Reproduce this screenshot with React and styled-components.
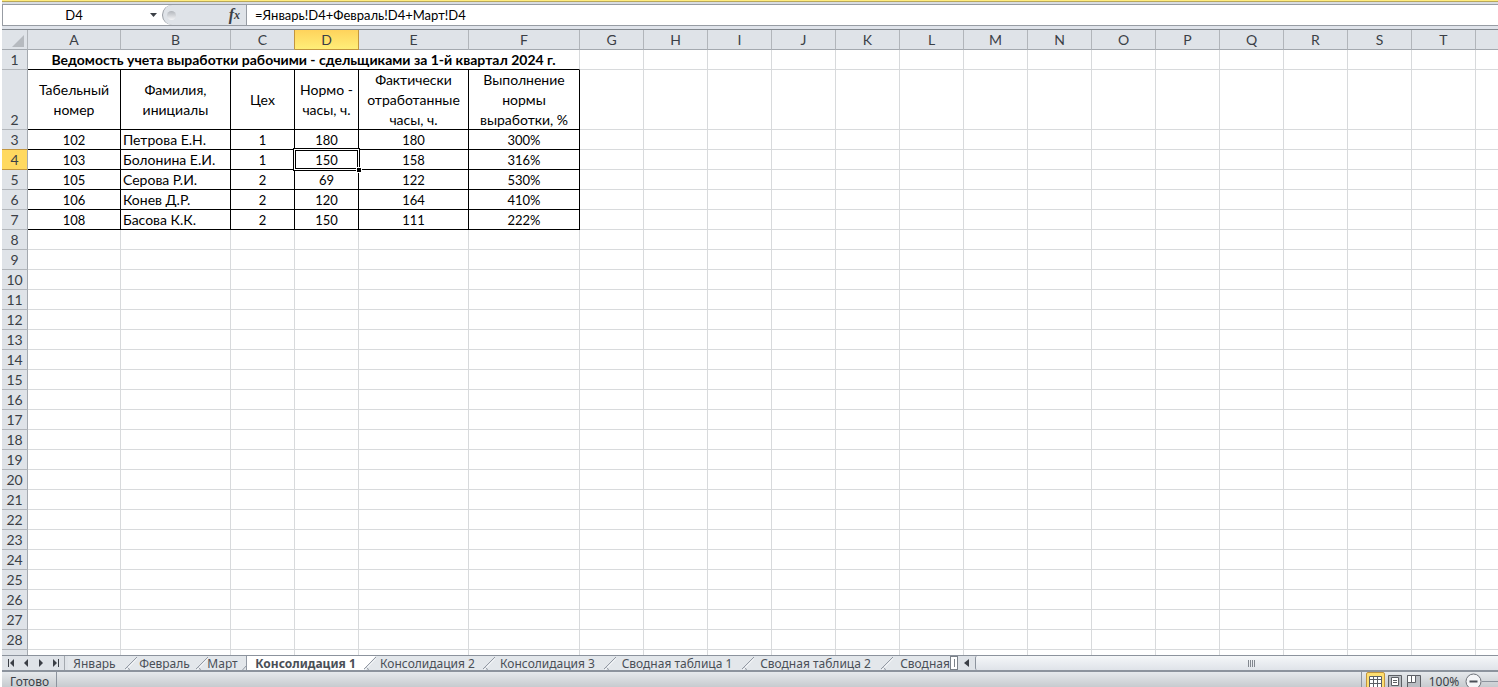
import React from 'react';
import styled, { createGlobalStyle } from 'styled-components';

const GlobalStyle = createGlobalStyle`
    * {
        box-sizing: border-box;
    }
    body {
        margin: 0;
        overflow: hidden;
    }
`

const Page = styled.div`
    display: flex;
    flex-direction: column;
    height: 100vh;
    padding-left: 2px;
    background: #ffffff;
    font-family: "Lato", "Noto Sans", sans-serif;
    font-size: 14px;
    color: #000000;
`

const TopEdge = styled.div`
    flex: none;
    height: 4px;
    background: linear-gradient(#ffec80 1px, #b9a858 1px, #b9a858 2px, #d9dde2 2px);
`

const FormulaBar = styled.div`
    flex: none;
    display: flex;
    height: 22px;
    border: 1px solid #979ca3;
    border-right: none;
`

const BareInput = styled.input`
    min-width: 0;
    padding: 0;
    border: none;
    outline: none;
    background: transparent;
    color: inherit;
    font: inherit;
    font-size: 13px;
`

const NameInput = styled(BareInput)`
    width: 142px;
    text-align: center;
`

const FormulaInput = styled(BareInput)`
    flex: 1;
    padding-left: 8px;
`

const PlainButton = styled.button`
    display: flex;
    align-items: center;
    justify-content: center;
    padding: 0;
    border: none;
    background: none;
    color: #3b3f46;
`

const NameArrow = styled(PlainButton)`
    width: 16px;
`

const FxArea = styled.div`
    flex: none;
    display: flex;
    justify-content: space-between;
    align-items: center;
    width: 85px;
    margin-left: 1px;
    padding: 0 6px 0 4px;
    border-right: 1px solid #979ca3;
    border-left: 1px solid #979ca3;
    border-radius: 11px 0 0 11px;
    background: #dfe3e8;
`

const Knob = styled.span`
    width: 9px;
    height: 9px;
    border-radius: 50%;
    background: linear-gradient(#b2b6bc, #f4f5f7);
`

const FxButton = styled(PlainButton)`
    font-family: "Liberation Serif", serif;
    font-size: 16px;
    font-style: italic;
    font-weight: bold;
    line-height: 18px;

    small {
        font-size: 12px;
    }
`

const BarGap = styled.div`
    flex: none;
    height: 4px;
    border-bottom: 1px solid #82888f;
    background: #dfe3ea;
`

const SheetArea = styled.div`
    flex: 1;
    min-height: 0;
    overflow: hidden;
`

const Sheet = styled.table`
    table-layout: fixed;
    width: 100%;
    border-collapse: separate;
    border-spacing: 0;
    line-height: 19px;
`

const Head = styled.th`
    height: 20px;
    padding: 0;
    border-right: 1px solid ${p => p.$edge ? '#c2953f' : '#b1b5ba'};
    border-bottom: 1px solid ${p => p.$active ? '#c2953f' : '#a4a9af'};
    background: ${p => p.$active ? 'linear-gradient(#ffd35c, #ffee78)' : '#dfe3e8'};
    color: #3b3f46;
    font-weight: normal;
    text-align: center;

    &:last-child {
        border-right: none;
    }
`

const RowHead = styled(Head)`
    border-right-color: #a4a9af;
    border-bottom-color: ${p => p.$edge ? '#c2953f' : '#b1b5ba'};
    background: ${p => p.$active ? '#ffd960' : '#dfe3e8'};
    vertical-align: bottom;
`

const Corner = styled(Head)`
    svg {
        display: block;
        margin: 3px 3px 0 auto;
    }
`

const Cell = styled.td`
    position: relative;
    height: 20px;
    padding: 0 2px;
    border-right: 1px solid ${p => p.$framed ? '#000000' : '#d8dadc'};
    border-bottom: 1px solid ${p => p.$framed ? '#000000' : '#d8dadc'};
    font-size: ${p => p.$numeric ? 13 : 14}px;
    line-height: ${p => p.$numeric ? 18 : 19}px;
    text-align: ${p => p.$left ? 'left' : 'center'};
    vertical-align: ${p => p.$numeric || p.$left ? 'baseline' : 'middle'};

    &:last-child {
        border-right: none;
    }
`

const TitleCell = styled(Cell)`
    border-right-color: #d8dadc;
    font-weight: bold;
    white-space: nowrap;
`

const Heading = styled.div`
    display: flex;
    align-items: center;
    justify-content: center;
    height: 59px;
    line-height: 20px;
    white-space: pre;
`

const Selection = styled.span`
    position: absolute;
    inset: -2px;
    border: 1px solid #000000;
    pointer-events: none;

    &::before {
        content: "";
        position: absolute;
        inset: 0;
        border: 1px solid #ffffff;
    }

    &::after {
        content: "";
        position: absolute;
        inset: 1px;
        border: 1px solid #000000;
    }
`

const FillHandle = styled.i`
    position: absolute;
    right: -4px;
    bottom: -4px;
    z-index: 1;
    width: 6px;
    height: 6px;
    border: 1px solid #ffffff;
    background: #000000;
`

const BottomBar = styled.div`
    flex: none;
    display: flex;
    height: 17px;
    border-top: 1px solid #8c939d;
    border-bottom: 2px solid #8c939d;
    background: #dfe3e8;
    font-family: "Noto Sans", sans-serif;
    font-size: 12px;
    color: #4a4f57;
`

const SheetNav = styled.div`
    flex: none;
    display: flex;
    width: 63px;
    padding-left: 1px;
    border-right: 1px solid #a4a9af;
`

const NavButton = styled(PlainButton)`
    width: 15px;
`

const Tabs = styled.nav`
    flex: none;
    display: flex;
    width: 885px;
    padding-left: 3px;
    overflow: hidden;
`

const Tab = styled.a`
    flex: none;
    display: flex;
    justify-content: center;
    width: ${p => p.$width}px;
    padding-right: ${p => p.$active ? 0 : 4}px;
    background: ${p => p.$active ? '#ffffff' : '#e3e7eb'};
    color: inherit;
    font-weight: ${p => p.$active ? 'bold' : 'normal'};
    line-height: 16px;
    text-decoration: none;
    white-space: nowrap;
`

const Slant = styled.svg`
    flex: none;
    display: block;
`

const Splitter = styled.div`
    flex: none;
    width: 8px;
    padding: 2px;
    border: 1px solid #7c828a;
    background: #ffffff;

    &::after {
        content: "";
        display: block;
        width: 1px;
        height: 8px;
        margin-left: 1px;
        background: #7c828a;
    }
`

const ScrollButton = styled(PlainButton)`
    width: 17px;
`

const ScrollThumb = styled.div`
    flex: 1;
    display: flex;
    align-items: center;
    justify-content: center;
    gap: 1px;
    padding-left: 28px;
    border-left: 1px solid #8c939d;
    border-radius: 2px 0 0 2px;
    background: linear-gradient(#f5f7f9, #dfe3e9);

    i {
        width: 1px;
        height: 7px;
        background: #82878f;
    }
`

const StatusBar = styled.div`
    flex: none;
    display: flex;
    height: 15px;
    overflow: hidden;
    background: linear-gradient(#e6e9ec, #c7cbcf);
    font-family: "Noto Sans", sans-serif;
    font-size: 12px;
    line-height: 20px;
    color: #3b3f46;
`

const StatusText = styled.span`
    width: 55px;
    padding-left: 8px;
    border-right: 1px solid #8c939d;
`

const ViewControls = styled.div`
    display: flex;
    align-items: flex-start;
    width: 137px;
    margin-left: auto;
    padding-left: 4px;
    border-left: 1px solid #8c939d;
`

const ViewButton = styled(PlainButton)`
    flex: none;
    width: 19px;
    height: 19px;
    border: 1px solid ${p => p.$active ? '#c2953f' : 'transparent'};
    border-radius: 2px;
    background: ${p => p.$active ? '#ffdf70' : 'none'};
`

const Zoom = styled.span`
    width: 42px;
    text-align: center;
`

const ZoomOut = styled(PlainButton)`
    flex: none;
    width: 17px;
    height: 17px;
    margin-top: 1px;
`

const ZoomTrack = styled.div`
    flex: 1;
    height: 1px;
    margin-top: 9px;
    background: #8c939d;
`

const LETTERS = 'ABCDEFGHIJKLMNOPQRST'.split('')
const WIDTHS = { A: 93, B: 110, E: 110, F: 111 }
const ROW_COUNT = 28

const HEADINGS = [
    'Табельный\nномер',
    'Фамилия,\nинициалы',
    'Цех',
    'Нормо -\nчасы, ч.',
    'Фактически\nотработанные\nчасы, ч.',
    'Выполнение\nнормы\nвыработки, %',
]

const DATA = {
    3: ['102', 'Петрова Е.Н.', '1', '180', '180', '300%'],
    4: ['103', 'Болонина Е.И.', '1', '150', '158', '316%'],
    5: ['105', 'Серова Р.И.', '2', '69', '122', '530%'],
    6: ['106', 'Конев Д.Р.', '2', '120', '164', '410%'],
    7: ['108', 'Басова К.К.', '2', '150', '111', '222%'],
}

const TABS = [
    { name: 'Январь', width: 57 },
    { name: 'Февраль', width: 59 },
    { name: 'Март', width: 33 },
    { name: 'Консолидация 1', width: 117, active: true },
    { name: 'Консолидация 2', width: 107 },
    { name: 'Консолидация 3', width: 109 },
    { name: 'Сводная таблица 1', width: 126 },
    { name: 'Сводная таблица 2', width: 127 },
    { name: 'Сводная', width: 68 },
]

const NAV_ICONS = [
    { label: 'Первый лист', path: 'M1 0h1v8H1zM7 0v8L3 4z' },
    { label: 'Предыдущий лист', path: 'M6 0v8L2 4z' },
    { label: 'Следующий лист', path: 'M2 0v8l4-4z' },
    { label: 'Последний лист', path: 'M1 0v8l4-4zM6 0h1v8H6z' },
]

/** one line of the sheet, the title row spans the first six columns */
const SheetRow = ({ number }) => {
    const values = DATA[number] || []
    const columns = number === 1 ? LETTERS.slice(6) : LETTERS

    return (
        <tr>
            <RowHead scope="row" $active={number === 4} $edge={number === 3 || number === 4}>{number}</RowHead>
            {number === 1 && (
                <TitleCell colSpan={6} $framed>
                    Ведомость учета выработки рабочими - сдельщиками за 1-й квартал 2024 г.
                </TitleCell>
            )}
            {columns.map((letter, i) => {
                const heading = number === 2 && HEADINGS[i]
                const isName = letter === 'B'
                return (
                    <Cell
                        key={letter}
                        $framed={Boolean(heading || values[i])}
                        $numeric={Boolean(values[i]) && !isName}
                        $left={isName && Boolean(values[i])}
                    >
                        {heading ? <Heading>{heading}</Heading> : values[i]}
                        {number === 4 && letter === 'D' && <><Selection /><FillHandle /></>}
                    </Cell>
                )
            })}
            <Cell />
        </tr>
    )
}

/** the edge between two tabs, the active tab hides the slash on its left */
const TabSlant = ({ before, after }) => {
    if (after) {
        return (
            <Slant width="6" height="14">
                <path d="M0 0h6v14H0z" fill="#e3e7eb" />
                <path d="M5.500 0v14M1.500 14l4-4.500" fill="none" stroke="#9299a3" />
            </Slant>
        )
    }
    return (
        <Slant width="12" height="14">
            <path d="M0 0h12L0 13z" fill={before ? '#ffffff' : '#e3e7eb'} />
            <path d="M12 0v14H0z" fill="#e3e7eb" />
            <path d="M-1 14L12.500 .5M2.500 10.500L4.500 14" fill="none" stroke="#9299a3" />
            <path d="M1 14L12.500 2" fill="none" stroke="#f7f8fa" />
        </Slant>
    )
}

const App = () => {
    const rows = Array.from({ length: ROW_COUNT }, (_, i) => i + 1)

    return (
        <Page>
            <GlobalStyle />
            <TopEdge />
            <FormulaBar>
                <NameInput aria-label="Имя ячейки" defaultValue="D4" />
                <NameArrow aria-label="Список имён">
                    <svg width="7" height="4"><path d="M0 0h7L3.500 4z" fill="currentColor" /></svg>
                </NameArrow>
                <FxArea>
                    <Knob />
                    <FxButton aria-label="Вставить функцию">f<small>x</small></FxButton>
                </FxArea>
                <FormulaInput aria-label="Строка формул" defaultValue="=Январь!D4+Февраль!D4+Март!D4" />
            </FormulaBar>
            <BarGap />
            <SheetArea>
                <Sheet>
                    <colgroup>
                        <col style={{ width: 26 }} />
                        {LETTERS.map(letter => <col key={letter} style={{ width: WIDTHS[letter] || 64 }} />)}
                        <col />
                    </colgroup>
                    <thead>
                        <tr>
                            <Corner>
                                <svg width="12" height="12"><path d="M12 0v12H0z" fill="#b6babf" /></svg>
                            </Corner>
                            {LETTERS.map(letter => (
                                <Head
                                    key={letter}
                                    scope="col"
                                    $active={letter === 'D'}
                                    $edge={letter === 'C' || letter === 'D'}
                                >
                                    {letter}
                                </Head>
                            ))}
                            <Head />
                        </tr>
                    </thead>
                    <tbody>
                        {rows.map(number => <SheetRow key={number} number={number} />)}
                        <SheetRow />
                    </tbody>
                </Sheet>
            </SheetArea>
            <BottomBar>
                <SheetNav>
                    {NAV_ICONS.map(({ label, path }) => (
                        <NavButton key={label} aria-label={label}>
                            <svg width="8" height="8"><path d={path} fill="currentColor" /></svg>
                        </NavButton>
                    ))}
                </SheetNav>
                <Tabs>
                    {TABS.map(({ name, width, active }, i) => (
                        <React.Fragment key={name}>
                            <Tab href="#" $width={width} $active={active}>{name}</Tab>
                            {TABS[i + 1] && <TabSlant before={active} after={TABS[i + 1].active} />}
                        </React.Fragment>
                    ))}
                </Tabs>
                <Splitter />
                <ScrollButton aria-label="Прокрутить влево">
                    <svg width="5" height="8"><path d="M5 0v8L0 4z" fill="currentColor" /></svg>
                </ScrollButton>
                <ScrollThumb><i /><i /><i /><i /></ScrollThumb>
            </BottomBar>
            <StatusBar>
                <StatusText>Готово</StatusText>
                <ViewControls>
                    <ViewButton aria-label="Обычный" $active>
                        <svg width="13" height="13" fill="none" stroke="#5c5f64">
                            <path fill="#ffffff" d="M.5 1.500h12v11H.5zM.5 4.500h12M.5 8.500h12M4.500 1.500v11M8.500 1.500v11" />
                        </svg>
                    </ViewButton>
                    <ViewButton aria-label="Разметка страницы">
                        <svg width="14" height="13" fill="#b9bdc2" stroke="#5c5f64">
                            <path d="M.5 .5h13v12H.5z" />
                            <path fill="#ffffff" d="M3.500 2.500h7v8h-7zM5 5.500h4M5 7.500h4" />
                        </svg>
                    </ViewButton>
                    <ViewButton aria-label="Страничный режим">
                        <svg width="14" height="13" fill="#b9bdc2" stroke="#5c5f64">
                            <path d="M.5 .5h13v12H.5z" />
                            <path fill="#ffffff" d="M.5 .5h4v7h-4zM4.500 .5h4v7h-4z" />
                        </svg>
                    </ViewButton>
                    <Zoom>100%</Zoom>
                    <ZoomOut aria-label="Уменьшить">
                        <svg width="17" height="17">
                            <circle cx="8.500" cy="8.500" r="7.500" fill="#f4f5f7" stroke="#6d7178" />
                            <path d="M4.500 8.500h8" stroke="#4a4f57" strokeWidth="2" />
                        </svg>
                    </ZoomOut>
                    <ZoomTrack />
                </ViewControls>
            </StatusBar>
        </Page>
    )
}

export default App;
